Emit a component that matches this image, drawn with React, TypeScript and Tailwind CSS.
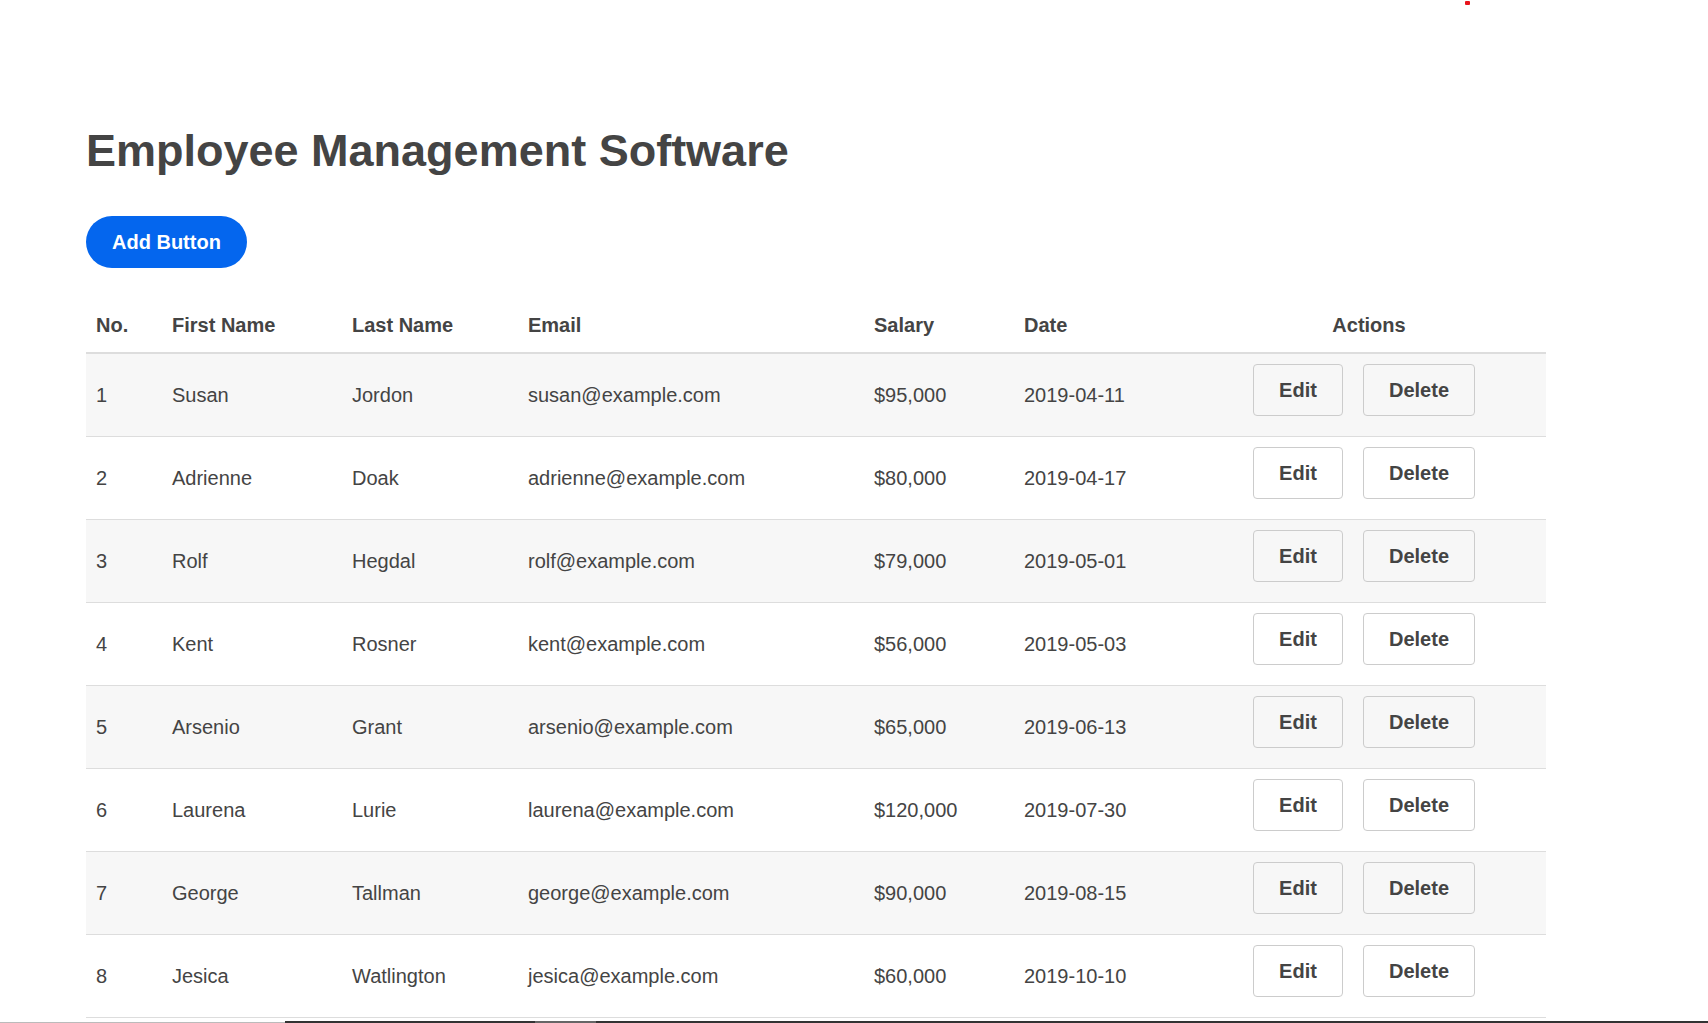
const employees = [
  { id: 1, first: "Susan", last: "Jordon", email: "susan@example.com", salary: "$95,000", date: "2019-04-11" },
  { id: 2, first: "Adrienne", last: "Doak", email: "adrienne@example.com", salary: "$80,000", date: "2019-04-17" },
  { id: 3, first: "Rolf", last: "Hegdal", email: "rolf@example.com", salary: "$79,000", date: "2019-05-01" },
  { id: 4, first: "Kent", last: "Rosner", email: "kent@example.com", salary: "$56,000", date: "2019-05-03" },
  { id: 5, first: "Arsenio", last: "Grant", email: "arsenio@example.com", salary: "$65,000", date: "2019-06-13" },
  { id: 6, first: "Laurena", last: "Lurie", email: "laurena@example.com", salary: "$120,000", date: "2019-07-30" },
  { id: 7, first: "George", last: "Tallman", email: "george@example.com", salary: "$90,000", date: "2019-08-15" },
  { id: 8, first: "Jesica", last: "Watlington", email: "jesica@example.com", salary: "$60,000", date: "2019-10-10" },
];

const App = () => {
  return (
    <div className="min-h-screen bg-white text-[#444] font-['Liberation_Sans',Arial,sans-serif]">
      {/* stray marks along the window edges */}
      <div className="fixed left-[1465px] top-[1px] h-[4px] w-[5px] rounded-[1px] bg-[#e8141c]" />
      <div className="fixed bottom-0 left-0 flex h-[2px] w-full">
        <div className="h-[1px] w-[285px] self-end bg-[#bbbbbb]" />
        <div className="flex flex-1 bg-[#333]">
          <div className="w-[250px]" />
          <div className="w-[61px] bg-[#666]" />
        </div>
      </div>

      <div className="px-[86px] pt-[125px]">
        <h1 className="text-[45px] font-bold leading-[51px]">Employee Management Software</h1>

        <button className="mt-[40px] h-[52px] rounded-full bg-[#0466ee] px-[26px] text-[20px] font-bold text-white">
          Add Button
        </button>

        {/* Employees table */}
        <table className="mt-[32px] w-[1460px] table-fixed border-collapse text-[20px]">
          <colgroup>
            <col className="w-[76px]" />
            <col className="w-[180px]" />
            <col className="w-[176px]" />
            <col className="w-[346px]" />
            <col className="w-[150px]" />
            <col className="w-[178px]" />
            <col className="w-[354px]" />
          </colgroup>
          <thead>
            <tr className="border-b-2 border-[#dddddd] text-left">
              <th className="px-[10px] pt-[10px] pb-[12px] font-bold">No.</th>
              <th className="px-[10px] pt-[10px] pb-[12px] font-bold">First Name</th>
              <th className="px-[10px] pt-[10px] pb-[12px] font-bold">Last Name</th>
              <th className="px-[10px] pt-[10px] pb-[12px] font-bold">Email</th>
              <th className="px-[10px] pt-[10px] pb-[12px] font-bold">Salary</th>
              <th className="px-[10px] pt-[10px] pb-[12px] font-bold">Date</th>
              <th className="px-[10px] pt-[10px] pb-[12px] text-center font-bold">Actions</th>
            </tr>
          </thead>
          <tbody>
            {employees.map((e, i) => (
              <tr
                key={e.id}
                className={`h-[83px] border-b border-[#dddddd] ${i % 2 === 0 ? "bg-[#f7f7f7]" : "bg-white"}`}
              >
                <td className="px-[10px]">{e.id}</td>
                <td className="px-[10px]">{e.first}</td>
                <td className="px-[10px]">{e.last}</td>
                <td className="px-[10px]">{e.email}</td>
                <td className="px-[10px]">{e.salary}</td>
                <td className="px-[10px]">{e.date}</td>
                <td className="px-[10px]">
                  <div className="mb-[10px] flex justify-center gap-[20px] pr-[10px]">
                    <button className="h-[52px] w-[90px] rounded-[4px] border border-[#cccccc] font-bold">
                      Edit
                    </button>
                    <button className="h-[52px] w-[112px] rounded-[4px] border border-[#cccccc] font-bold">
                      Delete
                    </button>
                  </div>
                </td>
              </tr>
            ))}
          </tbody>
        </table>
      </div>
    </div>
  );
};

export default App;
